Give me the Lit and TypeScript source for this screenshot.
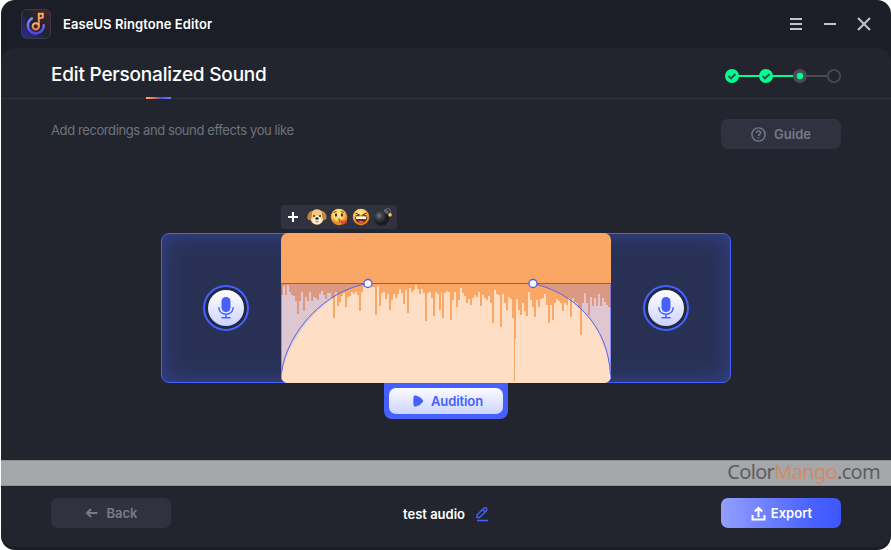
import { LitElement, html, css, svg } from "lit";
import { customElement } from "lit/decorators.js";

// Lower edge of the gap above each slice of the waveform, in thirds of a pixel.
const LEFT = [75,48,76,46,66,76,78,92,132,92,66,122,82,92,66,92,82,85,90,72,62,75,88,70,70,85,143,66,108,96,78,70,112,82,78,66,72,66,76,122,66,50,50,45,42,50,52,135,48,108,68,66,86,72,120,90,72,84,72,58,70,102,60,130,55,66,60,45,58,72,58,68,152,68,66,84,137,66,72,120];
const RIGHT = [66,143,70,62,66,150,90,66,110,90,54,70,78,100,86,106,84,75,80,66,108,75,85,90,78,98,158,60,72,76,170,72,98,120,80,86,145,333,88,120,134,98,124,137,66,90,110,140,90,110,88,85,72,104,160,104,150,98,88,92,98,122,98,106,85,140,85,95,100,115,194,100,70,98,135,82,108,84,108,72,108,85,96,104,112,112];

function wavePath(): string {
  let d = "M0 150";
  const step = (x0: number, x1: number, v: number) => {
    const y = v / 3 + 37;
    d += `L${x0} ${y}L${x1} ${y}`;
  };
  LEFT.forEach((v, i) => step(i * 2, i * 2 + 2, v));
  RIGHT.forEach((v, i) => {
    const x = 159 + i * 2;
    const narrow = v > 300;
    step(Math.max(160, x), Math.min(330, x + (narrow ? 1 : 2)), v);
  });
  return d + "L330 150Z";
}

@customElement("app-root")
export class AppRoot extends LitElement {
  static styles = css`
    :host { display: block; width: 891px; height: 550px; background: #fff; font-family: Inter, "Liberation Sans", sans-serif; overflow: hidden; }
    * { box-sizing: border-box; }
    svg { display: block; flex: none; }
    .window { width: 890px; height: 550px; margin-left: 1px; background: #1b1d27; border-radius: 14px; display: flex; flex-direction: column; overflow: hidden; }
    .titlebar { height: 48px; flex: none; display: flex; align-items: center; padding: 0 20px; color: #fff; }
    .name { margin-left: 12px; font-size: 13px; font-weight: 600; letter-spacing: 0.07px; flex: 1; }
    .controls { display: flex; gap: 20px; }
    .content { height: 499px; background: #22252d; border-radius: 14px; display: flex; flex-direction: column; }
    .heading { height: 51px; flex: none; border-bottom: 1px solid #30323d; display: flex; justify-content: space-between; padding: 0 49px 0 50px; }
    .titlebox { display: flex; flex-direction: column; align-items: center; height: 51px; }
    .title { color: #fff; font-size: 19px; line-height: 24px; padding-top: 15px; height: 49px; font-weight: 500; letter-spacing: -0.2px; white-space: nowrap; }
    .accent { width: 25px; height: 2px; background: linear-gradient(90deg, #ffad68, #e66b4c 35%, #554be5 60%, #7480f5); }
    .steps { margin-top: 20px; }
    .intro { height: 106px; flex: none; display: flex; justify-content: space-between; padding: 20px 50px 0; }
    .hint { color: #6f727f; font-size: 13px; line-height: 20px; margin-top: 1px; letter-spacing: -0.4px; white-space: nowrap; }
    .button { width: 120px; height: 30px; border-radius: 7px; background: #30333f; color: #777a8b; display: flex; align-items: center; justify-content: center; font-size: 13px; font-weight: 600; }
    .effects { width: 116px; height: 24px; flex: none; margin-left: 280px; background: #30333f; border-radius: 4px; display: flex; align-items: center; }
    .editor { width: 570px; height: 150px; flex: none; margin: 4px 0 0 160px; border: 1px solid #465fff; border-radius: 8px; background: #283154; box-shadow: inset 0 0 25px #35438f; display: grid; grid-template-columns: 119px 330px 119px; align-items: center; justify-items: center; }
    .wave { margin: -1px 0; }
    .mic { position: relative; left: 4px; }
    .mic.right { left: -5px; }
    .play { width: 124px; height: 36px; flex: none; margin-left: 383px; background: #465fff; border-radius: 0 0 8px 8px; padding: 5px; }
    .audition { height: 26px; border-radius: 7px; background: linear-gradient(#fcfcff, #ccd4ff); color: #465fff; font-size: 13px; font-weight: 600; letter-spacing: -0.1px; display: flex; align-items: center; padding-left: 24px; gap: 7px; }
    .watermark { margin-top: 41px; height: 26px; flex: none; background: #a6a7aa; border-top: 1px solid #8e9094; border-bottom: 1px solid #8e9094; color: #5c5d61; text-align: right; padding-right: 11px; font: 20px/22px "Noto Sans", sans-serif; letter-spacing: -0.68px; }
    .mango { color: #ce8c67; }
    .footer { display: flex; justify-content: space-between; padding: 12px 50px 0; }
    .file { height: 30px; display: flex; align-items: center; gap: 11px; color: #fff; font-size: 13px; font-weight: 600; padding-top: 2px; }
    .export { background: linear-gradient(90deg, #929fff, #465fff 80%, #3d57ff); color: #fff; padding-left: 1px; }
    .back { padding-left: 1px; }
    .back svg { margin-right: 8px; }
    .guide svg { margin-right: 8px; }
    .export svg { margin-right: 5px; }
  `;

  private mic(side: string) {
    return html`<svg class="mic ${side}" width="46" height="46" viewBox="0 0 46 46">
      <defs><linearGradient id="m" x2="0" y2="1"><stop stop-color="#fff"/><stop offset="1" stop-color="#ccd4ff"/></linearGradient></defs>
      <circle cx="23" cy="23" r="22" fill="#222743" stroke="#465fff" stroke-width="2"/>
      <circle cx="23" cy="23" r="18" fill="url(#m)"/>
      <rect x="18.5" y="12" width="9" height="15" rx="4.5" fill="#465fff"/>
      <path d="M15.8 22.2c.5 9.3 13.9 9.3 14.4 0M23 29v3.5M18.5 32.8h9" fill="none" stroke="#465fff" stroke-width="1.5"/>
    </svg>`;
  }

  private logo() {
    return html`<svg width="30" height="30" viewBox="0 0 30 30">
      <defs>
        <linearGradient id="l" x1="0" y1="1" x2="1" y2="0"><stop stop-color="#303091"/><stop offset=".5" stop-color="#20222f"/><stop offset="1" stop-color="#522621"/></linearGradient>
        <linearGradient id="ring" x2="0" y2="1"><stop stop-color="#8b91ff"/><stop offset="1" stop-color="#5148e5"/></linearGradient>
        <linearGradient id="note" x2="0" y2="1"><stop stop-color="#ffad62"/><stop offset="1" stop-color="#ed784f"/></linearGradient>
      </defs>
      <rect x=".5" y=".5" width="29" height="29" rx="5" fill="url(#l)" stroke="#38394a"/>
      <path d="M11 9.4A8 8 0 1 0 22.8 16.2" fill="none" stroke="url(#ring)" stroke-width="2.4" stroke-linecap="round"/>
      <path d="M17.8 17.5V4.8h4v3.6l-4 1.2" fill="none" stroke="url(#note)" stroke-width="2"/>
      <circle cx="14.8" cy="17.3" r="3.1" fill="none" stroke="url(#note)" stroke-width="2.1"/>
    </svg>`;
  }

  private effects() {
    const face = svg`<circle cx="9" cy="9" r="8.3" fill="url(#face)"/>`;
    return html`<svg width="116" height="24" viewBox="0 0 116 24">
      <defs>
        <radialGradient id="face" cx=".45" cy=".35"><stop stop-color="#fff0a0"/><stop offset=".65" stop-color="#ffd35c"/><stop offset="1" stop-color="#e78b2e"/></radialGradient>
        <radialGradient id="bomb" cx=".35" cy=".35"><stop stop-color="#777c85"/><stop offset=".45" stop-color="#3c4047"/><stop offset="1" stop-color="#191c22"/></radialGradient>
      </defs>
      <path d="M7 12h10M12 7v10" stroke="#fff" stroke-width="2"/>
      <g transform="translate(27 3)">
        <ellipse cx="9" cy="9" rx="7" ry="7.7" fill="#f7cb82"/>
        <path d="M4 3C1 3-1.5 8-.3 11c2 2.5 4 0 4.3-4zM14 3c3 0 5.5 5 4.3 8-2 2.5-4 0-4.3-4z" fill="#c98340"/>
        <ellipse cx="9" cy="12.2" rx="4.6" ry="4.1" fill="#fff2dc"/>
        <circle cx="6" cy="8" r="1" fill="#332820"/><circle cx="12" cy="8" r="1" fill="#332820"/>
        <ellipse cx="9" cy="10.5" rx="1.7" ry="1.2" fill="#302725"/>
        <path d="M7.3 13.2q1.7 1.5 3.4 0" fill="none" stroke="#a5664c"/>
      </g>
      <g transform="translate(49 3)">${face}
        <ellipse cx="6" cy="7" rx="1.2" ry="1.7" fill="#4d301d"/><ellipse cx="12" cy="7" rx="1.2" ry="1.7" fill="#4d301d"/>
        <path d="M3.5 4.5l3-1M11 3.5l3 1M8 11q3 0 1 1.5 2 .2 0 2" fill="none" stroke="#8c4d22"/>
        <path d="M13.5 16.5c-6-3-2-6 0-3 3-3 6 .5 0 3" fill="#e94432"/>
      </g>
      <g transform="translate(71 3)">${face}
        <path d="M3.5 5l4 2-4 1M14.5 5l-4 2 4 1" fill="none" stroke="#56341e" stroke-width="1.1"/>
        <path d="M3 8.8h12c0 9-12 9-12 0" fill="#74291c"/><path d="M4 8.8h10v2.2H4z" fill="#fff"/><path d="M6 14q3-2 6 0-3 2-6 0" fill="#ee6350"/>
      </g>
      <circle cx="100.5" cy="13" r="7.8" fill="url(#bomb)"/>
      <path d="M103 5l4 3" stroke="#60666d" stroke-width="3"/><path d="M105 5c1-3 6-2 4 4" fill="none" stroke="#777e82"/>
      <circle cx="109" cy="9.8" r="1.9" fill="#f5a83c"/><circle cx="109" cy="9.8" r=".9" fill="#ffe28a"/>
    </svg>`;
  }

  private wave() {
    return html`<svg class="wave" width="330" height="150" viewBox="0 0 330 150">
      <defs><clipPath id="clip"><rect width="330" height="150" rx="7"/></clipPath></defs>
      <g clip-path="url(#clip)">
        <rect width="330" height="150" fill="#faa665"/>
        <path d=${wavePath()} fill="#ffdec6" shape-rendering="crispEdges"/>
        <path d="M0 50H87C45 58 10 100 .5 140V150H0zM330 50H252C292 60 325 92 329.5 142V150h.5z" fill="#465fff" fill-opacity=".18"/>
        <path d="M.5 50V150M329.5 50V150" stroke="#465fff" stroke-opacity=".55"/>
      </g>
      <path d="M0 50.5H330" stroke="#5363e6"/>
      <path d="M87 50.5C45 57 6 98 .5 140M252 50.5C293 60 327 92 329.5 142" fill="none" stroke="#5867e8"/>
      <circle cx="87" cy="50.5" r="4" fill="#fff" stroke="#465fff" stroke-width="1.3"/>
      <circle cx="252" cy="50.5" r="4" fill="#fff" stroke="#465fff" stroke-width="1.3"/>
    </svg>`;
  }

  render() {
    return html`<div class="window">
      <div class="titlebar">${this.logo()}<div class="name">EaseUS Ringtone Editor</div>
        <div class="controls">
          <svg width="14" height="14" viewBox="0 0 14 14" stroke="#c1c2ce" stroke-width="2"><path d="M1 2h12M1 7h12M1 12h12"/></svg>
          <svg width="14" height="14" viewBox="0 0 14 14" stroke="#c1c2ce" stroke-width="2"><path d="M1 7h12"/></svg>
          <svg width="14" height="14" viewBox="0 0 14 14" stroke="#c1c2ce" stroke-width="2"><path d="M1 1l12 12M13 1L1 13"/></svg>
        </div>
      </div>
      <div class="content">
        <div class="heading">
          <div class="titlebox"><div class="title">Edit Personalized Sound</div><div class="accent"></div></div>
          <svg class="steps" width="118" height="16" viewBox="0 0 118 16">
            <path d="M8 8h68" stroke="#00ff8c" stroke-width="2"/><path d="M76 8h27" stroke="#484b58" stroke-width="2"/>
            <circle cx="8" cy="8" r="7" fill="#00ff8c"/><circle cx="42" cy="8" r="7" fill="#00ff8c"/>
            <path d="M4.5 8l2.5 2.5L11.5 6M38.5 8l2.5 2.5L45.5 6" fill="none" stroke="#3c4850" stroke-width="1.8"/>
            <circle cx="76" cy="8" r="7" fill="#484b58"/><circle cx="76" cy="8" r="3.2" fill="#00ff8c"/>
            <circle cx="110" cy="8" r="6.2" fill="#22252d" stroke="#484b58" stroke-width="1.7"/>
          </svg>
        </div>
        <div class="intro"><div class="hint">Add recordings and sound effects you like</div>
          <div class="button guide"><svg width="15" height="15" viewBox="0 0 15 15" fill="none" stroke="#777a8b" stroke-width="1.4"><circle cx="7.5" cy="7.5" r="6.6"/><path d="M5.5 6c0-2.8 4-2.5 4 0 0 1.3-2 1.5-2 3M7.5 10v1.2"/></svg>Guide</div>
        </div>
        <div class="effects">${this.effects()}</div>
        <div class="editor">${this.mic("")}${this.wave()}${this.mic("right")}</div>
        <div class="play"><div class="audition"><svg width="11" height="12" viewBox="0 0 11 12"><path d="M.5 2.2C.7.3 2 .1 3.8.7q4 1.4 6 4.3.7 1 0 2-2 2.900-6 4.300C2 11.900.7 11.700.5 9.800q-.3-3.800 0-7.600z" fill="#465fff"/></svg>Audition</div></div>
        <div class="watermark">Color<span class="mango">Mango</span>.com</div>
        <div class="footer">
          <div class="button back"><svg width="13" height="10" viewBox="0 0 13 10" fill="none" stroke="#777a8b" stroke-width="2"><path d="M12.500 5H2M6 1L2 5l4 4"/></svg>Back</div>
          <div class="file">test audio<svg width="13" height="15" viewBox="0 0 13 15" fill="none" stroke="#465fff" stroke-width="1.4"><path d="M1 10.500V8L8 1q1.200-.7 2.300.3 1 1.200.2 2.400l-7 6.800zM6.700 2.500l2.500 2.500M1 13.500h11"/></svg></div>
          <div class="button export"><svg width="15" height="15" viewBox="0 0 15 15" fill="none" stroke="#fff" stroke-width="2"><path d="M1.500 9v4.500h12V9M7.500 11V2M3.800 5.500l3.700-3.700 3.700 3.700"/></svg>Export</div>
        </div>
      </div>
    </div>`;
  }
}
